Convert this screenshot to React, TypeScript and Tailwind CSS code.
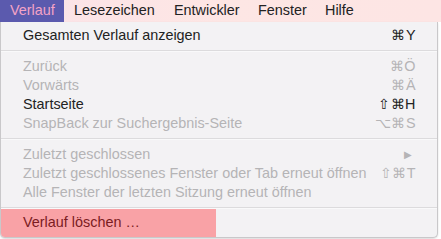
import React from "react";

type Item = { label: string; shortcut?: string; disabled?: boolean; arrow?: boolean };

const Row = ({ label, shortcut, disabled, arrow }: Item) => (
  <div className={`flex h-[19px] items-center justify-between pl-[22px] pr-[21px] ${disabled ? "text-[#b5b4b6]" : "text-[#222222]"}`}>
    <span>{label}</span>
    {arrow ? (
      <span className="mr-[4px] text-[10px] text-[#b5b4b6]">▶</span>
    ) : (
      shortcut && <span className="tracking-[0.5px]">{shortcut}</span>
    )}
  </div>
);

const Sep = () => (
  <div className="my-[5px] h-[2px] border-t border-[#dcdbdd] bg-[#f9f9fa]" />
);

export default function App() {
  return (
    <div className="h-[239px] w-[441px] overflow-hidden bg-white text-[14.4px] font-['Liberation_Sans',Arial,sans-serif]">
      <div className="flex h-[22px] items-center bg-gradient-to-r from-[#fbe3e8] via-[#fde6e4] to-[#fde5e4] text-[#222]">
        <div className="flex h-full w-[64px] items-center bg-[#5b5aae] pl-[10px] text-[#f4a3c6]">Verlauf</div>
        <div className="ml-[10px] w-[100px]">Lesezeichen</div>
        <div className="w-[84px]">Entwickler</div>
        <div className="w-[67px]">Fenster</div>
        <div>Hilfe</div>
      </div>
      <div className="w-[438px] rounded-b-[5px] border-x border-b border-[#c9c8ca] bg-[#f3f2f4] pt-[4px] shadow-[0_1px_2px_rgba(0,0,0,0.15)]">
        <Row label="Gesamten Verlauf anzeigen" shortcut="⌘Y" />
        <Sep />
        <Row label="Zurück" shortcut="⌘Ö" disabled />
        <Row label="Vorwärts" shortcut="⌘Ä" disabled />
        <Row label="Startseite" shortcut="⇧⌘H" />
        <Row label="SnapBack zur Suchergebnis-Seite" shortcut="⌥⌘S" disabled />
        <Sep />
        <Row label="Zuletzt geschlossen" disabled arrow />
        <Row label="Zuletzt geschlossenes Fenster oder Tab erneut öffnen" shortcut="⇧⌘T" disabled />
        <Row label="Alle Fenster der letzten Sitzung erneut öffnen" disabled />
        <div className="mt-[5px] h-[2px] border-t border-[#dcdbdd] bg-[#f9f9fa]" />
        <div className="flex h-[28px] w-[215px] items-center rounded-bl-[4px] bg-[#f9a2a6] pl-[22px] text-[#7b1c22]">Verlauf löschen …</div>
      </div>
    </div>
  );
}
